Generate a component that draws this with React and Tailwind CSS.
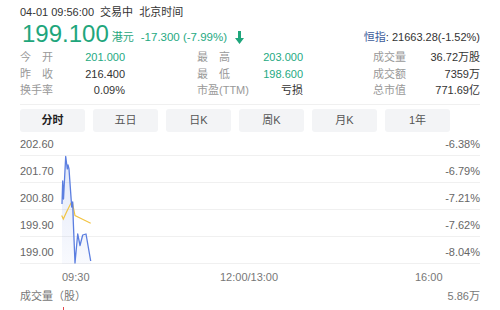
const font = { fontFamily: '"Liberation Sans", "Noto Sans CJK SC", sans-serif' };

const stats = [
  [
    ["今　开", "201.000", "text-[#25a982]"],
    ["最　高", "203.000", "text-[#25a982]"],
    ["成交量", "36.72万股", "text-[#333]"],
  ],
  [
    ["昨　收", "216.400", "text-[#333]"],
    ["最　低", "198.600", "text-[#25a982]"],
    ["成交额", "7359万", "text-[#333]"],
  ],
  [
    ["换手率", "0.09%", "text-[#333]"],
    ["市盈(TTM)", "亏损", "text-[#333]"],
    ["总市值", "771.69亿", "text-[#333]"],
  ],
];

const tabs = ["分时", "五日", "日K", "周K", "月K", "1年"];

const rows = [
  ["202.60", "-6.38%"],
  ["201.70", "-6.79%"],
  ["200.80", "-7.21%"],
  ["199.90", "-7.62%"],
  ["199.00", "-8.04%"],
];

// page coords -> svg coords (chart box starts at x=20, y=133)
const price = [
  [62, 205], [62.7, 182], [63.5, 200], [65.7, 157.5], [67.3, 170], [68, 166], [69, 170],
  [71.7, 208], [72.7, 203], [73.3, 223], [75, 264], [77.7, 235], [80, 246.5],
  [82.7, 236], [86, 235], [90.7, 262],
].map(([x, y]) => [x - 20, y - 133]);

const avg = [
  [61.7, 216.5], [63.3, 220], [67, 212], [71, 204], [72.5, 204], [75, 216.5], [80, 219], [90.7, 224.3],
].map(([x, y]) => [x - 20, y - 133]);

const toPath = (pts) => pts.map(([x, y], i) => `${i ? "L" : "M"}${x} ${y}`).join(" ");

function Chart() {
  const area = `${toPath(price)} L${price[price.length - 1][0]} 132 L${price[0][0]} 132 Z`;
  return (
    <div className="relative mx-5">
      {rows.map(([l, r], i) => (
        <div
          key={l}
          className={`flex items-end justify-between border-b border-[#f0f0f0] pb-[4px] text-[11px] leading-[14px] text-[#666] ${i === 0 ? "h-[24px]" : "h-[27px]"}`}
        >
          <span>{l}</span>
          <span>{r}</span>
        </div>
      ))}
      <svg className="absolute left-0 top-0" width="460" height="132" viewBox="0 0 460 132">
        <defs>
          <linearGradient id="fill" x1="0" y1="0" x2="0" y2="1">
            <stop offset="0" stopColor="#5b7ee0" stopOpacity="0.18" />
            <stop offset="1" stopColor="#5b7ee0" stopOpacity="0.04" />
          </linearGradient>
        </defs>
        <path d={area} fill="url(#fill)" />
        <path d={toPath(avg)} fill="none" stroke="#f2c443" strokeWidth="1.2" />
        <path d={toPath(price)} fill="none" stroke="#5b7ee0" strokeWidth="1.3" strokeLinejoin="round" />
      </svg>
    </div>
  );
}

export default function App() {
  return (
    <div className="w-[500px] h-[310px] overflow-hidden bg-white" style={font}>
      <div className="px-5 pt-[5px] text-[11px] leading-[14px] text-[#333]">
        04-01 09:56:00&nbsp;&nbsp;交易中&nbsp;&nbsp;北京时间
      </div>
      <div className="flex items-end px-5 h-[27px]">
        <span className="ml-[2px] text-[24px] leading-[24px] text-[#1fa67c]">199.100</span>
        <span className="ml-[3px] mb-[2px] text-[11px] leading-[14px] text-[#1fa67c]">港元</span>
        <span className="ml-[7px] mb-[2px] text-[11.5px] leading-[14px] text-[#25a982]">-17.300 (-7.99%)</span>
        <svg className="ml-[8px] mb-[2px]" width="9" height="13" viewBox="0 0 9 13">
          <path d="M3 0 H6 V7 H9 L4.5 13 L0 7 H3 Z" fill="#1fa67c" />
        </svg>
        <span className="ml-auto mb-[2px] text-[11px] leading-[14px] text-[#333]">
          <span className="text-[#3c5a9a]">恒指</span>: 21663.28(-1.52%)
        </span>
      </div>
      <div className="mx-5 mt-[3px] border-b border-[#f0f0f0] pb-[5px]">
        {stats.map((row, i) => (
          <div key={i} className="flex h-[16.5px] items-center text-[11px] leading-[14px]">
            {row.map(([label, value, color], j) => (
              <div
                key={j}
                className={`flex justify-between ${j === 0 ? "w-[105px]" : j === 1 ? "ml-[72px] w-[106px]" : "ml-[70px] w-[107px]"}`}
              >
                <span className="text-[#999]">{label}</span>
                <span className={color}>{value}</span>
              </div>
            ))}
          </div>
        ))}
      </div>
      <div className="flex gap-[8px] px-5 mt-[4px]">
        {tabs.map((t, i) => (
          <div
            key={t}
            className={`flex h-[23px] w-[65px] items-center justify-center rounded-[3px] bg-[#f3f4f6] text-[11px] ${i === 0 ? "font-bold text-[#222]" : "text-[#555]"}`}
          >
            {t}
          </div>
        ))}
      </div>
      <Chart />
      <div className="relative mx-5 h-[25px] text-[11px] leading-[14px] text-[#777]">
        <span className="absolute left-[42px] top-[6px]">09:30</span>
        <span className="absolute left-[200px] top-[6px]">12:00/13:00</span>
        <span className="absolute left-[395px] top-[6px]">16:00</span>
      </div>
      <div className="mx-5 flex justify-between text-[11px] leading-[14px] text-[#777]">
        <span>成交量（股）</span>
        <span>5.86万</span>
      </div>
      <div className="ml-[63px] mt-[4px] h-[4px] w-[1px] bg-[#e5484d]" />
    </div>
  );
}
